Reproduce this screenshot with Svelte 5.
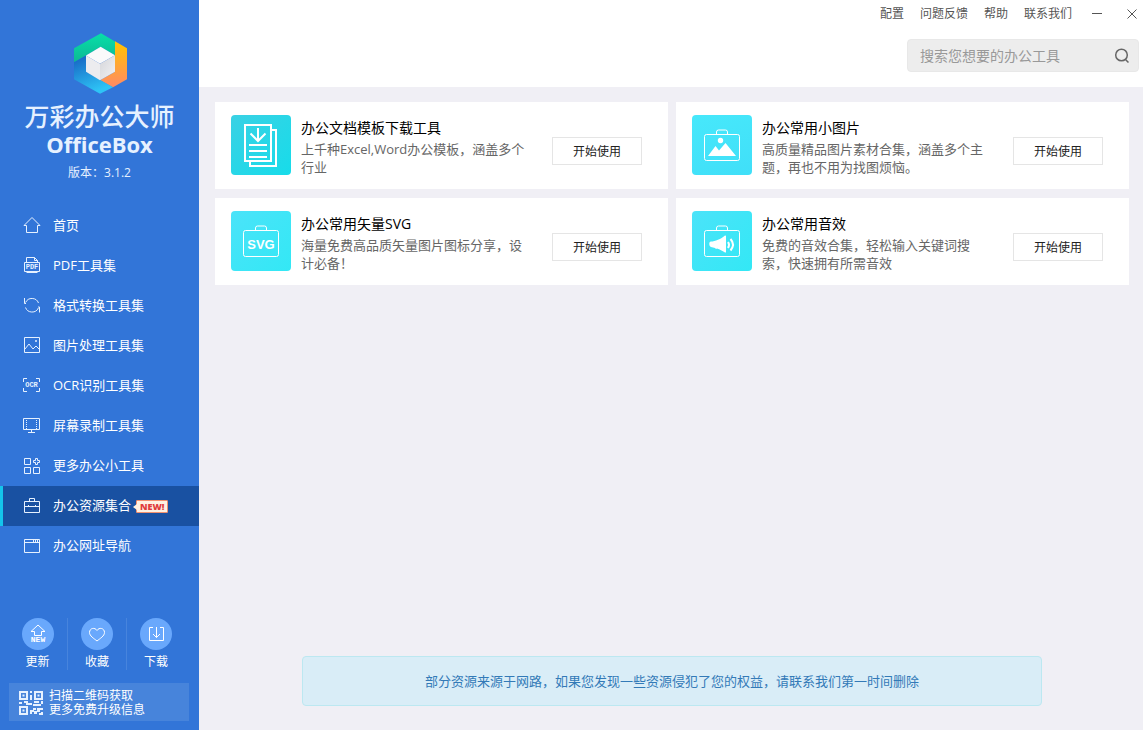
<script>
  const menu = ['配置', '问题反馈', '帮助', '联系我们'];

  const navItems = [
    { label: '首页', d: 'M1 8.5L9 .5l8 8M1 8.5h2.5v7h11v-7H17' },
    {
      label: 'PDF工具集',
      d: 'M3.5 5V.5h8l3 3V5M11.5.5v3h3M1.5 5.5h15v9h-15zM3.5 15.5h11',
      text: 'PDF',
      textY: 12
    },
    {
      label: '格式转换工具集',
      d: 'M1.5 1v5.5H3M2.6 5.5A7 7 0 0 1 15.5 6M16.5 15.5V10H15M15.400 11A7 7 0 0 1 2.500 10.500'
    },
    {
      label: '图片处理工具集',
      d: 'M1.5.5h15v15h-15zM2 12l4-5 4 5 3-3 3.5 3.5M12.5 3.5h1v1h-1z'
    },
    {
      label: 'OCR识别工具集',
      d: 'M4 1.5H.5V5M13 1.5h3.5V5M.5 11v3.5H4M16.5 11v3.5H13',
      text: 'OCR',
      textY: 10
    },
    {
      label: '屏幕录制工具集',
      d: 'M.5 1.5h16v11H.5zM8.5 13v2M5 15.5h7',
      dots: 'M3.5 3v9M13.5 3v9'
    },
    {
      label: '更多办公小工具',
      d: 'M1.5 1.5h6v6h-6zM1.5 10.5h6v6h-6zM10.5 10.5h6v6h-6zM12.5 1.5h2v2h2v2h-2v2h-2v-2h-2v-2h2z'
    },
    {
      label: '办公资源集合',
      d: 'M1.5 4.5h15v11h-15zM6.5 4V1.5h5V4M1.5 9.5h15M5.5 8v1M12.5 8v1',
      isNew: true
    },
    { label: '办公网址导航', d: 'M1.5 2.5h15v13h-15zM1.5 5.5h15M10.5 3v2M12.5 3v2M14.5 3v2' }
  ];

  const tools = [
    { icon: 'doc', title: '办公文档模板下载工具', desc: '上千种Excel,Word办公模板，涵盖多个行业' },
    { icon: 'image', title: '办公常用小图片', desc: '高质量精品图片素材合集，涵盖多个主题，再也不用为找图烦恼。' },
    { icon: 'svg', title: '办公常用矢量SVG', desc: '海量免费高品质矢量图片图标分享，设计必备！' },
    { icon: 'sound', title: '办公常用音效', desc: '免费的音效合集，轻松输入关键词搜索，快速拥有所需音效' }
  ];

  let active = $state('办公资源集合');
  let keyword = $state('');
</script>

<div class="app">
  <aside>
    <div class="brand">
      <svg class="logo" viewBox="0 0 159 182" aria-hidden="true">
        <defs>
          <linearGradient id="green" x1="0" y1="0" x2="0" y2="1">
            <stop offset="0" stop-color="#08dfa8" />
            <stop offset="1" stop-color="#0cb894" />
          </linearGradient>
          <linearGradient id="orange" x1="0" y1="0" x2="0" y2="1">
            <stop offset="0" stop-color="#ffc400" />
            <stop offset="1" stop-color="#ff8a65" />
          </linearGradient>
          <linearGradient id="blue" x1="0" y1="0" x2="0.4" y2="1">
            <stop offset="0" stop-color="#1560c0" />
            <stop offset="1" stop-color="#2ec4f6" />
          </linearGradient>
          <linearGradient id="side" x1="0" y1="0" x2="1" y2="1">
            <stop offset="0" stop-color="#d4d5d9" />
            <stop offset="1" stop-color="#f2f2f4" />
          </linearGradient>
        </defs>
        <path fill="url(#green)" d="M81 0l42 25v41L80 41 36 67 0 87V45z" />
        <path fill="url(#orange)" d="M123 24l36 21v93l-42 24-39-21 45-25z" />
        <path fill="url(#blue)" d="M0 87l36-20v49l81 46-39 20-78-44z" />
        <path fill="#fafafb" d="M80 41l43 25-45 26-42-25z" />
        <path fill="#ececef" d="M36 67l42 25v49l-42-25z" />
        <path fill="url(#side)" d="M123 66L78 92v49l45-25z" />
      </svg>
      <h1>万彩办公大师</h1>
      <div class="en">OfficeBox</div>
      <div class="version">版本：3.1.2</div>
    </div>

    <nav>
      {#each navItems as item}
        <a
          href="#{item.label}"
          class:active={active === item.label}
          onclick={(e) => { e.preventDefault(); active = item.label; }}
        >
          <svg viewBox="0 0 18 18" aria-hidden="true">
            <path d={item.d} />
            {#if item.dots}<path d={item.dots} stroke-dasharray="1 1" />{/if}
            {#if item.text}<text x={item.text === 'OCR' ? 8.5 : 9} y={item.textY}>{item.text}</text>{/if}
          </svg>
          <span>{item.label}</span>
          {#if item.isNew}<b class="new">NEW!</b>{/if}
        </a>
      {/each}
    </nav>

    <div class="foot">
      <div class="actions">
        <button type="button">
          <svg viewBox="0 0 32 32" aria-hidden="true">
            <path d="M16 7l7 6.5h-3.5v4h-7v-4H9z" />
            <text x="16" y="24">NEW</text>
          </svg>
          更新
        </button>
        <button type="button">
          <svg viewBox="0 0 32 32" aria-hidden="true">
            <path d="M16 12.5c-2-3.5-7.5-2.5-7.5 2 0 3.5 4.5 6 7.5 8.5 3-2.5 7.5-5 7.5-8.5 0-4.5-5.5-5.5-7.5-2z" />
          </svg>
          收藏
        </button>
        <button type="button">
          <svg viewBox="0 0 32 32" aria-hidden="true">
            <path d="M13 9.5H9.5v13h14v-13H20M16.5 9v10.5M13 16l3.5 3.5L20 16" />
          </svg>
          下载
        </button>
      </div>
      <a class="qr" href="#qr">
        <svg viewBox="0 0 24 24" aria-hidden="true">
          <path class="ring" d="M1 1h7v7H1zM16 1h7v7h-7zM1 16h7v7H1z" />
          <path d="M3.5 3.5h2v2h-2zM18.5 3.5h2v2h-2zM3.5 18.5h2v2h-2zM11 0h2v2h-2zM11 4h2v5h-2zM0 11h3v2H0zM5 10h4v2h4v2H7v-2H5zM15 10h5v2h-5zM22 10h2v3h-2zM14 13h8v2h-8zM11 19h3v-2h3v2h-2v2h-2v2h-2zM18 17h6v2h-3v2h-3v2h-3v-3h3zM22 21h2v3h-4v-2h2z" />
        </svg>
        <span>扫描二维码获取<br />更多免费升级信息</span>
      </a>
    </div>
  </aside>

  <div class="content">
    <header>
      <div class="menu">
        {#each menu as label}
          <a href="#{label}">{label}</a>
        {/each}
        <button type="button" class="minimize" aria-label="最小化">
          <svg viewBox="0 0 12 12"><path d="M1 5.5h10" /></svg>
        </button>
        <button type="button" aria-label="关闭">
          <svg viewBox="0 0 12 12"><path d="M1.500 1.500l9 9M10.500 1.500l-9 9" /></svg>
        </button>
      </div>
      <form class="search" onsubmit={(e) => e.preventDefault()}>
        <input type="text" aria-label="搜索" placeholder="搜索您想要的办公工具" bind:value={keyword} />
        <button type="submit" aria-label="搜索">
          <svg viewBox="0 0 16 16"><circle cx="7.5" cy="7" r="5.8" /><path d="M11.5 11.5l3 3" /></svg>
        </button>
      </form>
    </header>

    <main>
      <div class="grid">
        {#each tools as tool}
          <section class="card">
            <svg class="tile {tool.icon}" viewBox="0 0 60 60" aria-hidden="true">
              {#if tool.icon === 'doc'}
                <g stroke-width="2">
                  <path d="M14 10h26v36H14zM41 15h4v36H19v-4" />
                  <path d="M27 13v13M19.5 18.5L27 26l7.5-7.5M18 30h18M18 36h18M18 42h18" />
                </g>
              {:else}
                <rect x="12.5" y="19.5" width="35" height="26" rx="2" />
                <path d="M24.5 19v-2a2 2 0 0 1 2-2h7a2 2 0 0 1 2 2v2" />
              {/if}
              {#if tool.icon === 'image'}
                <g class="solid">
                  <circle cx="28.5" cy="25.5" r="2.7" />
                  <path d="M16 41l7.5-10 3.5 4.5 6.5-7.5L44 41z" />
                </g>
              {:else if tool.icon === 'svg'}
                <text x="30" y="38">SVG</text>
              {:else if tool.icon === 'sound'}
                <path class="solid" d="M19 30.5c4 0 10-2.5 14-6q1-.5 1 1v15q0 1.500-1 1c-3-2-5-3-8-4l-1 .5-1-1-4-1c-2-.5-2.500-5.500 0-5.500z" />
                <path stroke-width="2" d="M36 31q2 2.500 0 6M38.500 28q5 5.500 0 11.500" />
              {/if}
            </svg>
            <div class="info">
              <h2>{tool.title}</h2>
              <p>{tool.desc}</p>
            </div>
            <button type="button">开始使用</button>
          </section>
        {/each}
      </div>
      <p class="notice">部分资源来源于网路，如果您发现一些资源侵犯了您的权益，请联系我们第一时间删除</p>
    </main>
  </div>
</div>

<style>
  :global(body) {
    margin: 0;
    font-family: "Open Sans", "Noto Sans CJK SC", sans-serif;
    font-size: 13px;
    background: #f0eff5;
  }

  * {
    box-sizing: border-box;
  }

  a {
    color: inherit;
    text-decoration: none;
  }

  button {
    padding: 0;
    border: 0;
    background: none;
    color: inherit;
    font-family: inherit;
    cursor: pointer;
  }

  svg {
    flex: none;
    fill: none;
    stroke: currentColor;
  }

  svg text {
    fill: currentColor;
    stroke: none;
    text-anchor: middle;
  }

  .app {
    display: flex;
    min-height: 100vh;
  }

  aside {
    display: flex;
    flex-direction: column;
    flex: none;
    width: 199px;
    background: #3275d8;
    color: #fff;
  }

  .brand {
    display: flex;
    flex-direction: column;
    align-items: center;
    padding-top: 33px;
    color: #e6f1ff;
  }

  .logo {
    width: 53px;
    height: 61px;
    margin-left: 2px;
    stroke: none;
  }

  h1 {
    margin: 7px 0 0;
    font-size: 25px;
    font-weight: 500;
    line-height: 30px;
  }

  .en {
    font-size: 22px;
    font-weight: 700;
    line-height: 27px;
  }

  .version {
    margin-top: 6px;
    font-size: 12px;
    line-height: 18px;
  }

  nav {
    margin-top: 24px;
  }

  nav a {
    display: flex;
    align-items: center;
    height: 40px;
    padding-left: 20px;
    border-left: 3px solid transparent;
  }

  nav a.active {
    border-left-color: #14c5ec;
    background: #1951a2;
  }

  nav svg {
    width: 18px;
    height: 18px;
    margin-right: 12px;
    color: #e6f1ff;
  }

  nav span {
    padding-bottom: 3px;
  }

  nav text {
    font-family: "Liberation Mono", monospace;
    font-size: 7px;
    font-weight: 700;
  }

  .new {
    position: relative;
    margin-left: 5px;
    padding: 0 3px;
    border: 1px solid #f2906f;
    border-radius: 1px;
    background: #fff1e2;
    color: #e03c3c;
    font-size: 9px;
    font-weight: 800;
    line-height: 11px;
  }

  /* little arrow pointing back at the label */
  .new::before {
    content: "";
    position: absolute;
    top: 3px;
    left: -4px;
    border: solid transparent;
    border-width: 3px 4px 3px 0;
    border-right-color: #fff1e2;
  }

  .foot {
    margin-top: auto;
    padding: 0 10px 9px 9px;
  }

  .actions {
    display: flex;
    margin: 0 0 13px -1px;
  }

  .actions button {
    display: flex;
    flex-direction: column;
    align-items: center;
    gap: 3px;
    width: 59px;
    font-size: 12px;
    line-height: 17px;
  }

  .actions button + button {
    border-left: 1px solid #4784dd;
  }

  .actions svg {
    width: 32px;
    height: 32px;
    border-radius: 50%;
    background: #69a8fc;
  }

  .actions text {
    font-family: "Liberation Mono", monospace;
    font-size: 8px;
    font-weight: 700;
  }

  .qr {
    display: flex;
    align-items: center;
    gap: 6px;
    height: 38px;
    padding: 2px 0 0 10px;
    background: #4784db;
    font-size: 12px;
    line-height: 14px;
  }

  .qr svg {
    width: 24px;
    height: 24px;
    fill: #e6f1ff;
    stroke: none;
  }

  .qr .ring {
    fill: none;
    stroke: #e6f1ff;
    stroke-width: 2;
  }

  .content {
    display: flex;
    flex: 1;
    flex-direction: column;
    min-width: 0;
  }

  header {
    display: flex;
    flex-direction: column;
    align-items: flex-end;
    height: 87px;
    padding: 5px 4px 0 16px;
    background: #fff;
  }

  .menu {
    display: flex;
    align-items: center;
    gap: 16px;
    height: 18px;
    margin: 0 1px 16px 0;
    color: #555;
    font-size: 12px;
    line-height: 18px;
  }

  .menu button {
    display: flex;
  }

  .menu .minimize {
    margin: 0 7px 0 3px;
  }

  .menu svg {
    width: 12px;
    height: 12px;
  }

  .search {
    display: flex;
    align-items: center;
    width: 232px;
    height: 33px;
    padding: 0 8px 0 12px;
    border: 1px solid #e8e8e8;
    border-radius: 4px;
    background: #ededed;
  }

  .search input {
    flex: 1;
    min-width: 0;
    padding: 0;
    border: 0;
    outline: 0;
    background: none;
    color: #333;
    font: inherit;
    font-size: 14px;
  }

  .search input::placeholder {
    color: #999;
    opacity: 1;
  }

  .search button {
    display: flex;
    color: #666;
  }

  .search svg {
    width: 16px;
    height: 16px;
    stroke-width: 1.5;
  }

  main {
    display: flex;
    flex: 1;
    flex-direction: column;
    padding: 15px 14px 24px 16px;
  }

  .grid {
    display: grid;
    grid-template-columns: repeat(auto-fit, minmax(400px, 1fr));
    gap: 9px 8px;
  }

  .card {
    display: flex;
    align-items: flex-start;
    min-height: 87px;
    padding: 13px 26px 13px 16px;
    background: #fff;
  }

  .tile {
    width: 60px;
    height: 60px;
    margin-right: 10px;
    border-radius: 4px;
    background: linear-gradient(135deg, #4be3f9, #33e8f5);
    color: #fff;
  }

  .tile.doc {
    background: linear-gradient(135deg, #3ad1e4, #17dcea);
  }

  .tile.image {
    background: linear-gradient(160deg, #47e8fb, #40dff8);
  }

  .tile text {
    font-family: "Liberation Sans", sans-serif;
    font-size: 13px;
    font-weight: 700;
  }

  .solid {
    fill: currentColor;
    stroke: none;
  }

  .info {
    flex: 1;
    padding-top: 3px;
  }

  h2 {
    margin: 0 0 2px;
    color: #000;
    font-size: 14px;
    font-weight: 400;
    line-height: 20px;
  }

  .info p {
    margin: 0;
    color: #666;
    line-height: 18px;
  }

  .card button {
    flex: none;
    width: 90px;
    height: 28px;
    margin-top: 22px;
    margin-left: 21px;
    border: 1px solid #e5e5e5;
    background: #fff;
    color: #222;
    font-size: 12px;
  }

  .notice {
    width: 100%;
    max-width: 740px;
    margin: auto auto 0;
    padding: 15px;
    border: 1px solid #bce8f1;
    border-radius: 4px;
    background: #d9edf7;
    color: #337ab7;
    line-height: 18px;
    text-align: center;
  }
</style>
